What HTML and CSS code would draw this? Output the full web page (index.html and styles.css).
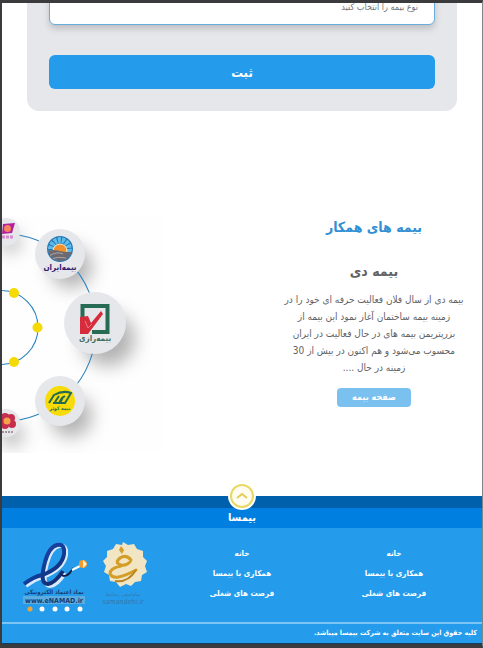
FILE: index.html
```html
<!DOCTYPE html>
<html lang="fa" dir="rtl">
<head>
<meta charset="utf-8">
<meta name="viewport" content="width=device-width, initial-scale=1">
<title>بیمسا</title>
<link rel="stylesheet" href="styles.css">
</head>
<body>
<main>
  <form class="card">
    <select class="field" aria-label="نوع بیمه">
      <option>نوع بیمه را انتخاب کنید</option>
    </select>
    <button class="submit" type="button">ثبت</button>
  </form>

  <section class="partners">
    <div class="about">
      <h2>بیمه های همکار</h2>
      <h3>بیمه دی</h3>
      <p>بیمه دی از سال فلان فعالیت حرفه ای خود را در<br>زمینه بیمه ساختمان آغاز نمود این بیمه از<br>بزرپتریمن بیمه های در حال فعالیت در ایران<br>محسوب می‌شود و هم اکنون در بیش از 30<br>زمینه در حال ....</p>
      <a class="more" href="#">صفحه بیمه</a>
    </div>
    <svg class="orbit" viewBox="0 0 160 240" width="160" height="240" aria-hidden="true">
      <defs>
        <filter id="soft" x="-60%" y="-60%" width="240%" height="240%"><feGaussianBlur stdDeviation="9"/></filter>
        <clipPath id="sunClip"><circle cx="58" cy="36" r="12"/></clipPath>
      </defs>
      <rect y="4" width="160" height="236" fill="#fefefe"/>
      <g fill="#808080" opacity=".6" filter="url(#soft)">
        <circle cx="8" cy="29" r="10"/><circle cx="69" cy="54" r="21"/>
        <circle cx="106" cy="126" r="27"/><circle cx="69" cy="203" r="21"/>
        <circle cx="10" cy="222" r="11"/>
      </g>
      <g fill="none" stroke="#2a83be" stroke-width="1.1">
        <circle cx="0" cy="114.500" r="94"/><circle cx="-1" cy="114.500" r="37"/>
      </g>
      <g fill="#f5da06"><circle cx="12" cy="80" r="5"/><circle cx="35.500" cy="114.500" r="5"/><circle cx="12" cy="149" r="5"/></g>
      <g fill="#e6e7eb">
        <circle cx="4" cy="19" r="14"/><circle cx="58" cy="41" r="25"/>
        <circle cx="93" cy="110" r="31"/><circle cx="58" cy="188" r="25"/>
        <circle cx="4" cy="210" r="14"/>
      </g>
      <path d="M1 11l12-1-3 10-10 1z" fill="#b51f9b"/><circle cx="5.500" cy="15.500" r="3.500" fill="#f4845f"/><path d="M0 24h12" stroke="#d78acb" stroke-width="3" stroke-dasharray="3 1"/>
      <g>
        <circle cx="58" cy="36" r="13" fill="#2577b5"/>
        <g clip-path="url(#sunClip)">
          <circle cx="58" cy="36" r="9" fill="none" stroke="#5dbbea" stroke-width="6" stroke-dasharray="3 1"/>
          <circle cx="58" cy="38" r="7" fill="#f2902d" stroke="#fff0cf"/>
          <path d="M44 38q7-2 14 0t14 0v14H44z" fill="#6c6a70"/>
          <path d="M47 43q8-5 14-2M49 46q8-3 15-1" stroke="#aaa6a8" fill="none"/>
        </g>
        <text class="logo-text" x="58" y="57" fill="#31206f" font-size="8">بیمه‌ایران</text>
      </g>
      <path d="M80.500 109V93h25v26H90" fill="none" stroke="#276b54" stroke-width="4"/>
      <path d="M78 104l8-1 3 7 10-12 2 3-15 20h-8z" fill="#d72c3c"/>
      <path d="M83 108l3 7 4-4" fill="none" stroke="#eb7b84" stroke-width="1"/>
      <text class="logo-text" x="93" y="128" fill="#436e60" font-size="8">بیمه‌رازی</text>
      <circle cx="58" cy="188" r="15" fill="#f8db08"/>
      <path d="M47 190l5-8q9-5 17-2l-6 10h-5l3-6m-8 5l4-6m-6 7h6l3-5 3-2" fill="none" stroke="#236c50" stroke-width="2"/>
      <text class="logo-text" x="58" y="197" fill="#236c50" font-size="5">بیمه کوثر</text>
      <g fill="#c52e4e"><circle cx="3" cy="205" r="5"/><circle cx="9" cy="205" r="4"/><circle cx="10" cy="211" r="4"/><circle cx="3" cy="212" r="4"/></g>
      <circle cx="5" cy="208" r="3.500" fill="#f3a14c"/><path d="M0 219h12" stroke="#a7949d" stroke-width="2" stroke-dasharray="2 1"/>
    </svg>
  </section>
</main>

<footer>
  <div class="strip">
    <a class="to-top" href="#" aria-label="بالا">
      <svg viewBox="0 0 28 28" width="28" height="28"><circle cx="14" cy="14" r="14" fill="#fff"/><circle cx="14" cy="14" r="11" fill="#fffdf2" stroke="#e9d964" stroke-width="2"/><path d="M9 16l5-4 5 4" fill="none" stroke="#e3ce55" stroke-width="2"/></svg>
    </a>
  </div>
  <div class="brand">بیمسا</div>
  <div class="columns">
    <nav><a href="#">خانه</a><a href="#">همکاری با بیمسا</a><a href="#">فرصت های شغلی</a></nav>
    <nav><a href="#">خانه</a><a href="#">همکاری با بیمسا</a><a href="#">فرصت های شغلی</a></nav>
    <div class="badges">
      <svg viewBox="0 0 52 70" width="52" height="70" aria-hidden="true">
        <path d="M26 2l5 3 6-1 3 5 6 2 0 6 4 4-2 5 2 6-5 3-1 6-6 1-4 4-5-2-6 3-4-5-6-1-1-6-5-3 2-6-3-5 4-4 0-6 6-2 3-5 6 1z" fill="#f1e5c4"/>
        <path d="M24 6l3 4-2 4-3-4z" fill="#d39d26"/>
        <path d="M34 20q-5-6-11-2-6 5 1 7 5 1 9-3M24 26q-11 2-11 8 4 8 26-4" fill="none" stroke="#d39d26" stroke-width="3" stroke-linecap="round"/>
        <path d="M18 41q13 2 21-11" fill="none" stroke="#b98520" stroke-width="2"/>
        <text class="seal-text" x="26" y="56" font-size="5">ساماندهی رسانه‌ها</text>
        <text class="seal-text" x="26" y="64" font-size="7">samandehi.ir</text>
      </svg>
      <svg viewBox="0 0 66 74" width="66" height="74" aria-hidden="true">
        <defs><linearGradient id="blue" x1="0" y1="0" x2="1" y2="1"><stop stop-color="#3b3fa0"/><stop offset=".5" stop-color="#103f9c"/><stop offset="1" stop-color="#172664"/></linearGradient></defs>
        <path d="M3 45q9-7 17-9 21-8 23-22 1-11-7-9-8 2-12 17-6 22 3 23 7 0 15-13" transform="translate(1 1)" fill="none" stroke="#d8eafa" stroke-width="4"/>
        <path d="M2 44q9-7 18-9 20-7 22-21 1-11-7-9-8 2-12 17-6 22 3 22 7-1 15-13" fill="none" stroke="url(#blue)" stroke-width="4"/>
        <path d="M39 33q4 6 12-6-1 9-9 10-4-1-3-4z" fill="#111d48"/><path d="M50 30l8-4" stroke="#fff" stroke-width="2"/>
        <circle cx="61" cy="24" r="4" fill="#f49a28"/><path d="M61 20v8l4-4z" fill="#fff0cf"/>
        <text class="enamad-text" x="32" y="54" font-size="6">نماد اعتماد الکترونیکی</text>
        <rect x="1" y="56" width="62" height="8" fill="#5dacdf"/>
        <text class="enamad-text" x="32" y="63" font-size="7">www.eNAMAD.ir</text>
        <circle cx="8" cy="69" r="2.500" fill="#efa33c"/><g fill="#fff"><circle cx="20" cy="69" r="2.500"/><circle cx="33" cy="69" r="2.500"/><circle cx="45" cy="69" r="2.500"/><circle cx="58" cy="69" r="2.500"/></g>
      </svg>
    </div>
  </div>
  <p class="copyright">کلیه حقوق این سایت متعلق به شرکت بیمسا میباشد.</p>
</footer>
</body>
</html>
```
FILE: styles.css
```css
* { box-sizing: border-box; }
body {
  margin: 0;
  min-height: 100vh;
  border: solid #3b3a3d;
  border-width: 3px 1px 4px 2px;
  border-right-color: #858589;
  background: #fff;
  color: #626365;
  font-family: "DejaVu Sans Condensed", "DejaVu Sans", sans-serif;
  font-size: 10px;
  display: flex;
  flex-direction: column;
}
main { flex: 1 0 auto; overflow: hidden; }
h2, h3, p { margin: 0; }
a { color: inherit; text-decoration: none; }

.card {
  margin: -10px 25px 0;
  padding: 0 22px 22px;
  background: #e6e7eb;
  border-radius: 0 0 12px 12px;
  display: flex;
  flex-direction: column;
  gap: 30px;
}
.field {
  appearance: none;
  height: 32px;
  padding: 0 16px 4px;
  border: 1px solid #69addb;
  border-radius: 6px;
  background: #fff;
  box-shadow: 0 4px 6px #bfc0c4;
  color: #747578;
  font-family: inherit;
  font-size: 9px;
}
.submit {
  height: 34px;
  border: 0;
  border-radius: 6px;
  background: #249ceb;
  color: #fff;
  font: bold 13px "DejaVu Sans Condensed", "DejaVu Sans", sans-serif;
}

.partners {
  margin-top: 102px;
  display: flex;
  justify-content: space-between;
}
.about {
  flex: 0 0 45%;
  text-align: center;
  white-space: nowrap;
}
.about h2 { color: #318fd3; font-size: 14px; line-height: 28px; }
.about h3 { margin-top: 16px; font-size: 14px; line-height: 28px; }
.about p { margin-top: 6px; line-height: 17px; }
.more {
  display: inline-block;
  margin-top: 12px;
  padding: 0 15px;
  border-radius: 4px;
  background: #7bc1f0;
  color: #fff;
  font-size: 9px;
  font-weight: bold;
  line-height: 19px;
}
.orbit { flex: none; }

footer { background: #249ceb; color: #fff; }
.strip { position: relative; height: 12px; background: #0060ab; }
.to-top { position: absolute; top: -14px; left: 50%; margin-left: -14px; height: 28px; }
.brand {
  background: #007fe0;
  font-size: 11px;
  font-weight: bold;
  line-height: 20px;
  text-align: center;
}
.columns {
  display: grid;
  grid-template-columns: repeat(3, 1fr);
  padding: 12px 12px 8px;
}
nav {
  padding-top: 4px;
  display: flex;
  flex-direction: column;
  align-items: center;
  font-size: 8px;
  font-weight: bold;
  line-height: 20px;
}
.badges { display: flex; justify-content: flex-end; gap: 9px; padding-left: 8px; }
.copyright {
  padding: 0 5px;
  border-top: 2px solid #7cc4f4;
  border-bottom: 1px solid #123d68;
  font-size: 7px;
  font-weight: bold;
  line-height: 19px;
}

.logo-text, .seal-text, .enamad-text { text-anchor: middle; font-weight: bold; }
.seal-text { fill: #3579aa; font-weight: normal; }
.enamad-text { fill: #173d72; }
```
